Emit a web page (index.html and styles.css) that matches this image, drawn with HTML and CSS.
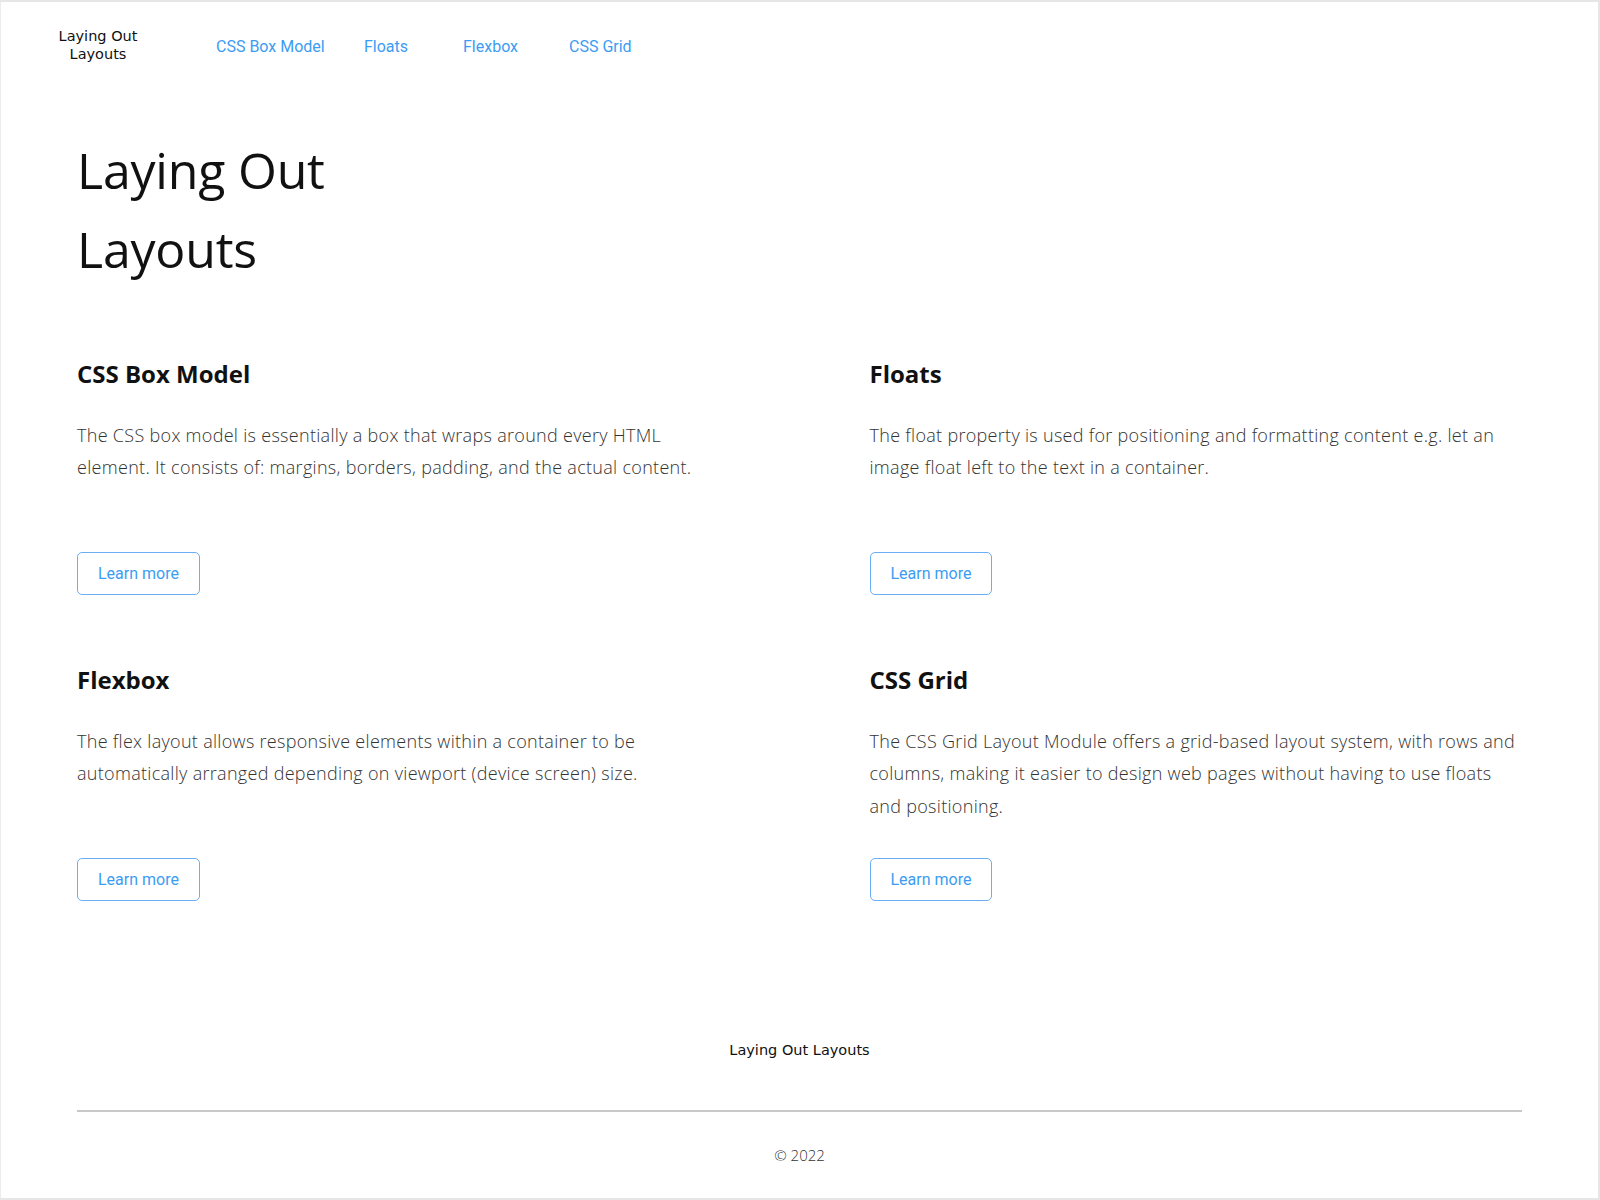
FILE: index.html
```html
<!DOCTYPE html>
<html lang="en">
<head>
<meta charset="utf-8">
<title>Laying Out Layouts</title>
<link rel="stylesheet" href="styles.css">
</head>
<body>
<header class="site-header">
  <a class="logo" href="#">Laying Out<br>Layouts</a>
  <nav class="nav">
    <a href="#box">CSS Box Model</a>
    <a href="#floats">Floats</a>
    <a href="#flexbox">Flexbox</a>
    <a href="#grid">CSS Grid</a>
  </nav>
</header>
<main class="main">
  <h1 class="title">Laying Out<br>Layouts</h1>
  <section class="cards">
    <article class="card" id="box">
      <h2>CSS Box Model</h2>
      <p>The CSS box model is essentially a box that wraps around every HTML element. It consists of: margins, borders, padding, and the actual content.</p>
      <a class="btn" href="#">Learn more</a>
    </article>
    <article class="card" id="floats">
      <h2>Floats</h2>
      <p>The float property is used for positioning and formatting content e.g. let an image float left to the text in a container.</p>
      <a class="btn" href="#">Learn more</a>
    </article>
    <article class="card" id="flexbox">
      <h2>Flexbox</h2>
      <p>The flex layout allows responsive elements within a container to be automatically arranged depending on viewport (device screen) size.</p>
      <a class="btn" href="#">Learn more</a>
    </article>
    <article class="card" id="grid">
      <h2>CSS Grid</h2>
      <p>The CSS Grid Layout Module offers a grid-based layout system, with rows and columns, making it easier to design web pages without having to use floats and positioning.</p>
      <a class="btn" href="#">Learn more</a>
    </article>
  </section>
  <footer class="site-footer">
    <div class="footer-title">Laying Out Layouts</div>
    <hr class="rule">
    <div class="copy">© 2022</div>
  </footer>
</main>
</body>
</html>
```
FILE: styles.css
```css
html, body {
  margin: 0;
  padding: 0;
}
body {
  box-sizing: border-box;
  height: 1200px;
  overflow: hidden;
  background: #fff;
  border-top: 2px solid #e6e6e6;
  border-left: 1px solid #ececec;
  border-right: 2px solid #e6e6e6;
  border-bottom: 2px solid #e6e6e6;
  font-family: "Open Sans", "Liberation Sans", sans-serif;
  color: #333;
}
a { text-decoration: none; }

.site-header {
  display: flex;
  align-items: center;
  padding: 25px 0 0 55px;
}
.logo {
  width: 84px;
  text-align: center;
  font-family: "DejaVu Sans", "Liberation Sans", sans-serif;
  font-size: 14.5px;
  line-height: 18.4px;
  color: #111;
}
.nav {
  display: grid;
  grid-template-columns: 148px 99px 106px auto;
  margin-left: 76px;
  padding-top: 4px;
}
.nav a {
  font-family: Roboto, "Liberation Sans", sans-serif;
  font-size: 16px;
  line-height: 20px;
  color: #3c9cf3;
}

.main {
  padding: 0 76px;
}
.title {
  margin: 67px 0 70px;
  font-family: "Open Sans", sans-serif;
  font-weight: 400;
  font-size: 50px;
  line-height: 79px;
  color: #111;
  letter-spacing: -0.2px;
}
.cards {
  display: grid;
  grid-template-columns: 1fr 1fr;
  column-gap: 140px;
  row-gap: 70px;
}
.card {
  display: flex;
  flex-direction: column;
  align-items: flex-start;
  height: 236px;
}
.card h2 {
  margin: 0 0 30px;
  font-family: "Open Sans", sans-serif;
  font-weight: 700;
  font-size: 24px;
  line-height: 30px;
  color: #111;
}
.card p {
  margin: 0;
  font-weight: 300;
  font-size: 18px;
  line-height: 32.5px;
  letter-spacing: 0.3px;
  color: #333;
}
.btn {
  margin-top: auto;
  box-sizing: border-box;
  height: 43px;
  padding: 10px 20px;
  border: 1px solid #6aaef3;
  border-radius: 5px;
  font-family: Roboto, "Liberation Sans", sans-serif;
  font-size: 16px;
  line-height: 21px;
  color: #3c9cf3;
}

.site-footer {
  margin-top: 139px;
  text-align: center;
}
.footer-title {
  font-family: "DejaVu Sans", "Liberation Sans", sans-serif;
  font-size: 14.5px;
  line-height: 20px;
  color: #111;
}
.rule {
  margin: 50px 0 33px;
  border: 0;
  height: 2px;
  background: #c8c8c8;
}
.copy {
  font-family: "Open Sans", sans-serif;
  font-weight: 300;
  font-size: 15px;
  line-height: 20px;
  color: #333;
}
```
